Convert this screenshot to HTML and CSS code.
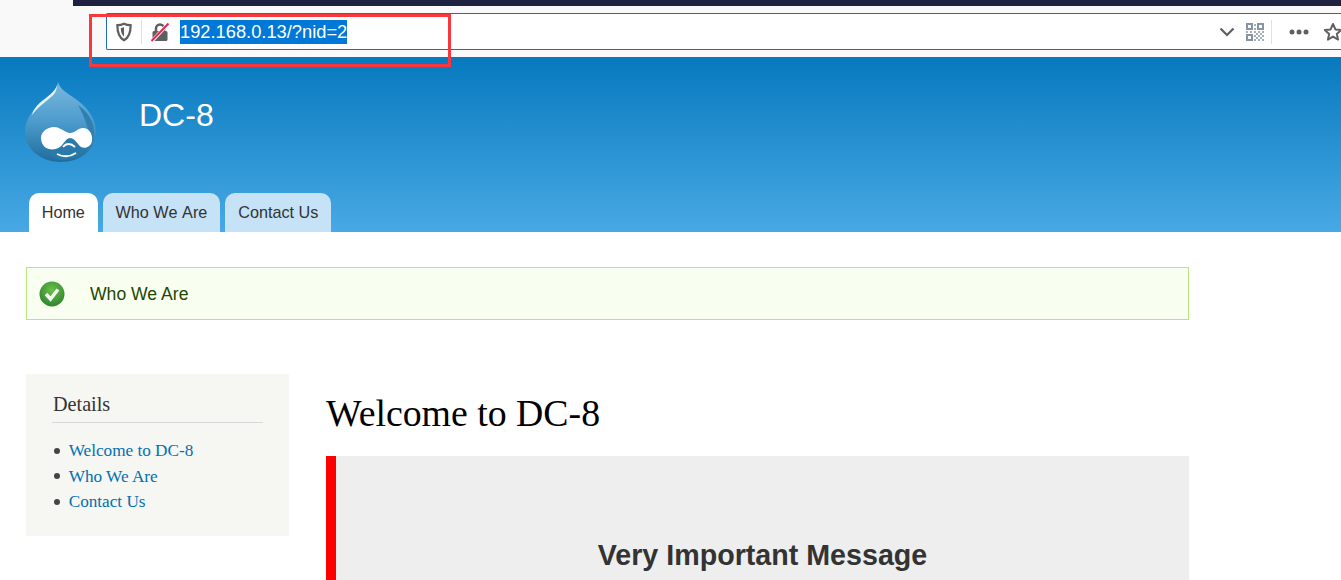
FILE: index.html
```html
<!DOCTYPE html>
<html lang="en">
<head>
    <meta charset="UTF-8">
    <meta name="viewport" content="width=device-width, initial-scale=1.0">
    <title>DC-8</title>
    <link rel="stylesheet" href="styles.css">
</head>
<body>
    <div class="toolbar">
        <div class="topstrip"></div>
        <div class="urlbar">
            <svg class="shield" width="18" height="20" viewBox="0 0 16 18">
                <path d="M8 1.500c2 .9 4 1.300 6 1.400 0 6-1 10.800-6 13.600C3 13.700 2 8.900 2 2.900c2-.1 4-.5 6-1.400z" fill="none" stroke="#5f5f63" stroke-width="2"/>
                <path d="M8 4.500v8.500c-2-1.500-2.800-3.500-2.900-7.600 1-.1 2-.4 2.900-.9z" fill="#5f5f63"/>
            </svg>
            <span class="sep"></span>
            <svg class="lock" width="20" height="20" viewBox="0 0 20 20">
                <path d="M6 9V6.500a4 4 0 0 1 8 0V9" fill="none" stroke="#5f5f63" stroke-width="2.500"/>
                <rect x="2.500" y="9" width="15" height="10" rx="1.500" fill="#5f5f63"/>
                <path d="M2 19 18 2" stroke="#fff" stroke-width="3.500"/>
                <path d="M1.500 19 18.500 1.500" stroke="#e22850" stroke-width="2"/>
            </svg>
            <span class="url">192.168.0.13/?nid=2</span>
            <svg class="chevron" width="16" height="10" viewBox="0 0 16 10">
                <path d="M1.500 1.500 8 8l6.500-6.500" fill="none" stroke="#5f5f63" stroke-width="2.200"/>
            </svg>
            <svg class="qr" width="18" height="18" viewBox="0 0 18 18">
                <path d="M0 0h7v7H0zM2 2v3h3V2zM11 0h7v7h-7zM13 2v3h3V2zM0 11h7v7H0zM2 13v3h3v-3z" fill="#8794a3" fill-rule="evenodd"/>
                <path d="M8 1h2v2H8zM8 5h2v2H8zM0 8h2v2H0zM4 8h2v2H4zM8 8h2v2H8zM12 8h2v2h-2zM16 8h2v2h-2zM8 12h2v2H8zM12 12h2v2h-2zM16 12h2v2h-2zM10 10h2v2h-2zM14 10h2v2h-2zM8 16h2v2H8zM12 16h2v2h-2zM16 16h2v2h-2zM10 14h2v2h-2zM14 14h2v2h-2z" fill="#a4aeb9"/>
            </svg>
            <span class="sep sep-right"></span>
            <svg class="dots" width="20" height="6" viewBox="0 0 20 6">
                <circle cx="3" cy="3" r="2.500" fill="#5f5f63"/>
                <circle cx="10" cy="3" r="2.500" fill="#5f5f63"/>
                <circle cx="17" cy="3" r="2.500" fill="#5f5f63"/>
            </svg>
            <svg class="star" width="20" height="20" viewBox="0 0 20 20">
                <path d="M10 2l2.400 5.400 5.800.6-4.400 3.900 1.300 5.700-5.100-3-5.100 3 1.300-5.700L1.800 8l5.800-.6z" fill="none" stroke="#5f5f63" stroke-width="2" stroke-linejoin="round"/>
            </svg>
        </div>
    </div>
    <div class="redbox"></div>

    <div class="header">
        <div class="branding">
            <svg class="logo" width="74" height="82" viewBox="0 0 74 82">
                <defs>
                    <linearGradient id="drop" x1="0" y1="0" x2="0" y2="1">
                        <stop offset="0" stop-color="#7ab8dd"/>
                        <stop offset="0.5" stop-color="#4c9bcd"/>
                        <stop offset="1" stop-color="#1f6d9f"/>
                    </linearGradient>
                </defs>
                <path d="M33 0C35 8 44 12 52 18 63 26 71 37 71 50 71 67 56 80 36 80 16 80 0 67 0 50 0 36 9 26 20 18 27 13 32 8 33 0z" fill="url(#drop)"/>
                <path d="M32 3C30 10 23 14 17 19 12 23 8 28 7 33 12 26 19 21 25 16 29 13 32 9 32 3z" fill="#e4f1f9"/>
                <path d="M53 23C62 29 69 39 69 50 69 55 68 59 66 62 64 48 60 35 53 23z" fill="#2f7fb0"/>
                <path d="M20 66C28 66 36 56 42 57 50 56 56 62 64 62 60 72 50 78 36 78 30 78 24 73 20 66z" fill="#2a7aa9"/>
                <path d="M16 56C16 50 22 45 29 45 36 45 40 51 45 51 50 51 53 46 58 46 64 46 68 52 67 59 66 65 60 67 56 65 52 62 50 56 45 56 41 56 39 62 35 65 31 68 25 68 21 66 18 64 16 60 16 56z" fill="#fff"/>
                <path d="M38 65C41 61 46 61 50 65" fill="none" stroke="#fff" stroke-width="1.800"/>
                <path d="M32 72C38 75 45 75 51 71" fill="none" stroke="#fff" stroke-width="1.800"/>
            </svg>
            <div class="site-name">DC-8</div>
        </div>
        <ul class="tabs">
            <li class="tab active">Home</li>
            <li class="tab">Who We Are</li>
            <li class="tab">Contact Us</li>
        </ul>
    </div>

    <div class="page">
        <div class="message">
            <svg class="ok" width="26" height="26" viewBox="0 0 26 26">
                <defs>
                    <radialGradient id="okfill" cx="0.5" cy="0.35" r="0.7">
                        <stop offset="0" stop-color="#6cc04a"/>
                        <stop offset="1" stop-color="#2a7f2e"/>
                    </radialGradient>
                </defs>
                <circle cx="13" cy="13" r="12.500" fill="url(#okfill)"/>
                <path d="M7 13l4.500 5L19 8.500" fill="none" stroke="#f2f7ef" stroke-width="3.500"/>
            </svg>
            <span>Who We Are</span>
        </div>

        <div class="columns">
            <div class="sidebar">
                <h2>Details</h2>
                <ul>
                    <li><a href="#">Welcome to DC-8</a></li>
                    <li><a href="#">Who We Are</a></li>
                    <li><a href="#">Contact Us</a></li>
                </ul>
            </div>
            <div class="content">
                <h1>Welcome to DC-8</h1>
                <div class="notice">
                    <h3>Very Important Message</h3>
                </div>
            </div>
        </div>
    </div>
</body>
</html>
```

FILE: styles.css
```css
html, body {
    height: 580px;
    overflow: hidden;
}

body {
    margin: 0;
    background: white;
    font-family: "Liberation Sans", Arial, sans-serif;
    color: #333;
    position: relative;
}

.toolbar {
    height: 57px;
    background: #f9f9fa;
    box-sizing: border-box;
    padding-left: 106px;
}

.topstrip {
    height: 6px;
    margin-left: -33px;
    margin-bottom: 7px;
    background: #1e2240;
}

.urlbar {
    height: 37px;
    box-sizing: border-box;
    background: white;
    border: 1px solid #1d6fb3;
    border-right: none;
    border-radius: 2px 0 0 2px;
    display: flex;
    align-items: center;
}

.shield {
    margin-left: 8px;
}

.sep {
    width: 1px;
    height: 24px;
    background: #e0e0e2;
    margin-left: 8px;
}

.lock {
    margin-left: 8px;
}

.url {
    margin-left: 10px;
    background: #0078d7;
    color: white;
    font-size: 18.300px;
    line-height: 24px;
    font-family: "Liberation Sans", Arial, sans-serif;
}

.chevron {
    margin-left: auto;
}

.qr {
    margin-left: 11px;
}

.sep-right {
    margin-left: 7px;
}

.dots {
    margin-left: 17px;
}

.star {
    margin-left: 14px;
    margin-right: -2px;
}

.redbox {
    position: absolute;
    left: 89px;
    top: 14px;
    width: 356px;
    height: 47px;
    border: 3px solid #f9383e;
}

.header {
    height: 175px;
    box-sizing: border-box;
    background: linear-gradient(#0779bf, #48a9e4);
    padding: 25px 0 0 25px;
    display: flex;
    flex-direction: column;
}

.branding {
    display: flex;
    height: 111px;
}

.site-name {
    margin-left: 40px;
    margin-top: 14px;
    font-size: 32px;
    line-height: 38px;
    color: white;
}

.tabs {
    list-style: none;
    margin: 0 0 0 4px;
    padding: 0;
    display: flex;
    gap: 5px;
}

.tab {
    height: 39px;
    line-height: 39px;
    padding: 0 13px;
    background: #c6e2f6;
    border-radius: 10px 10px 0 0;
    font-size: 16.200px;
    font-kerning: none;
    color: #333;
}

.tab.active {
    background: white;
    padding: 0 12.700px;
}

.page {
    width: 1163px;
    margin-left: 26px;
    padding-top: 35px;
}

.message {
    height: 53px;
    box-sizing: border-box;
    border: 1px solid #b5e77a;
    background: #f8fff0;
    display: flex;
    align-items: center;
    padding-left: 12px;
    font-size: 17.600px;
    color: #234600;
}

.message span {
    margin-left: 25px;
    padding-top: 2px;
}

.columns {
    display: flex;
    margin-top: 54px;
}

.sidebar {
    width: 263px;
    height: 162px;
    box-sizing: border-box;
    background: #f6f6f2;
    padding: 15px 26px 0 26px;
    font-family: "Liberation Serif", Georgia, serif;
    flex-shrink: 0;
}

.sidebar h2 {
    margin: 0;
    font-size: 20.200px;
    font-weight: normal;
    line-height: 31px;
    padding-bottom: 2px;
    padding-left: 1px;
    border-bottom: 1px solid #d8d8d8;
}

.sidebar ul {
    list-style: none;
    margin: 15px 0 0;
    padding: 0 0 0 2px;
    font-size: 17.200px;
    line-height: 25.600px;
}

.sidebar li {
    display: flex;
    align-items: center;
}

.sidebar li::before {
    content: "";
    width: 6px;
    height: 6px;
    margin-right: 8.700px;
    border-radius: 50%;
    background: #444;
}

.sidebar a {
    color: #0071b3;
    text-decoration: none;
}

.content {
    flex: 1;
    margin-left: 37px;
}

.content h1 {
    margin: 18px 0 22px;
    font-family: "Liberation Serif", Georgia, serif;
    font-size: 37.800px;
    font-weight: normal;
    line-height: 42px;
    color: black;
}

.notice {
    height: 124px;
    box-sizing: border-box;
    background: #eee;
    border-left: 10px solid red;
    padding-top: 82px;
}

.notice h3 {
    margin: 0;
    text-align: center;
    font-size: 28.650px;
    line-height: 34px;
    font-weight: bold;
    color: #333;
}
```
